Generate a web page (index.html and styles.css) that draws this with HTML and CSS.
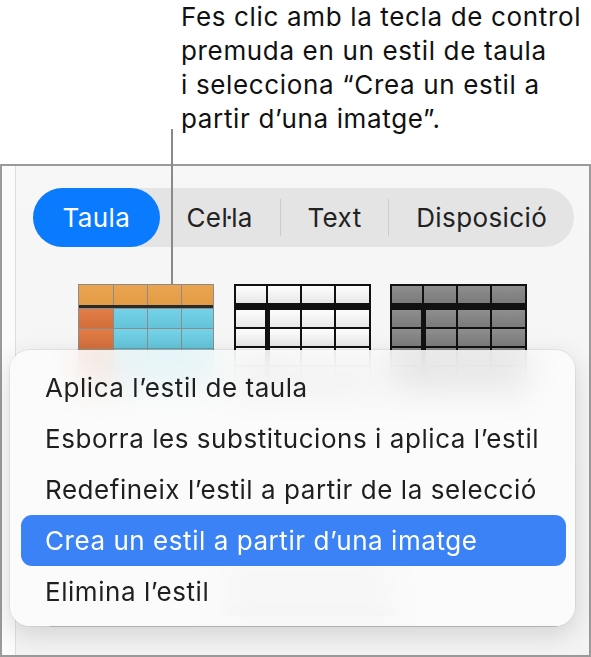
FILE: index.html
```html
<!DOCTYPE html>
<html lang="ca">
<head>
    <meta charset="UTF-8">
    <meta name="viewport" content="width=device-width, initial-scale=1.0">
    <title>Estils de taula</title>
    <link rel="stylesheet" href="styles.css">
</head>
<body>
    <p class="callout">Fes clic amb la tecla de control<br>premuda en un estil de taula<br>i selecciona “Crea un estil a<br>partir d’una imatge”.</p>
    <div class="leader"></div>

    <div class="panel">
        <div class="sidebar-edge"></div>
        <div class="inspector">
            <div class="tabs">
                <span class="tab active">Taula</span>
                <span class="tab">Cel·la</span>
                <span class="sep"></span>
                <span class="tab">Text</span>
                <span class="sep"></span>
                <span class="tab">Disposició</span>
            </div>

            <div class="styles">
                <div class="thumb thumb-color">
                    <div class="head"><i></i><i></i><i></i><i></i></div>
                    <div class="body">
                        <i class="first"></i><i></i><i></i><i></i>
                        <i class="first"></i><i></i><i></i><i></i>
                        <i class="first"></i><i></i><i></i><i></i>
                        <i class="first"></i><i></i><i></i><i></i>
                    </div>
                </div>
                <div class="thumb thumb-lined">
                    <div class="head"><i></i><i></i><i></i><i></i></div>
                    <div class="body">
                        <i></i><i></i><i></i><i></i>
                        <i></i><i></i><i></i><i></i>
                        <i></i><i></i><i></i><i></i>
                        <i></i><i></i><i></i><i></i>
                    </div>
                </div>
                <div class="thumb thumb-lined thumb-dark">
                    <div class="head"><i></i><i></i><i></i><i></i></div>
                    <div class="body">
                        <i></i><i></i><i></i><i></i>
                        <i></i><i></i><i></i><i></i>
                        <i></i><i></i><i></i><i></i>
                        <i></i><i></i><i></i><i></i>
                    </div>
                </div>
            </div>

            <div class="labels">
                <span class="label-bar"></span>
                <span class="label-bar short"></span>
            </div>

            <div class="rule"></div>
        </div>
    </div>

    <ul class="menu">
        <li class="item">Aplica l’estil de taula</li>
        <li class="item">Esborra les substitucions i aplica l’estil</li>
        <li class="item">Redefineix l’estil a partir de la selecció</li>
        <li class="item selected">Crea un estil a partir d’una imatge</li>
        <li class="item">Elimina l’estil</li>
    </ul>
</body>
</html>
```

FILE: styles.css
```css
body {
    margin: 0;
    width: 591px;
    height: 657px;
    overflow: hidden;
    background: #ffffff;
    font-family: "Inter", "Noto Sans", sans-serif;
    color: #1c1c1e;
}

.callout {
    margin: 0;
    box-sizing: border-box;
    height: 164px;
    padding: 0 0 0 181px;
    font-size: 26px;
    line-height: 34px;
    letter-spacing: 0.65px;
    color: #111111;
}

.leader {
    position: absolute;
    left: 171px;
    top: 129px;
    width: 2px;
    height: 155px;
    background: #8a8a8a;
    z-index: 2;
}

.panel {
    display: flex;
    box-sizing: border-box;
    height: 493px;
    border: 2px solid #9a9a9a;
    background: #f5f5f5;
}

.sidebar-edge {
    width: 13px;
    background: #fbfbfb;
    border-right: 1px solid #dedede;
}

.inspector {
    flex: 1;
    display: flex;
    flex-direction: column;
    background: linear-gradient(#f7f7f7, #f3f3f3);
}

/* segmented control */
.tabs {
    display: flex;
    align-items: center;
    height: 59px;
    margin: 22px 15px 0 17px;
    border-radius: 30px;
    background: #e4e4e4;
    font-size: 26px;
    letter-spacing: 0.4px;
}

.tab {
    flex: 1 1 auto;
    height: 59px;
    line-height: 59px;
    text-align: center;
    color: #222222;
}

.tab.active {
    flex-grow: 1.1;
    border-radius: 30px;
    background: #0a7bff;
    color: #ffffff;
}

.sep {
    width: 1px;
    height: 37px;
    background: #cccccc;
}

/* table style thumbnails */
.styles {
    display: flex;
    justify-content: center;
    gap: 19.5px;
    margin-top: 37px;
}

.thumb {
    display: flex;
    flex-direction: column;
    box-sizing: border-box;
}

.thumb i {
    display: block;
}

.thumb-color {
    width: 136px;
    padding: 1px;
    background: #8c8c8c;
}

.thumb-color .head {
    display: grid;
    grid-template-columns: 34px 33px 33px 31px;
    grid-auto-rows: 20px;
    gap: 1px;
    border-bottom: 3px solid #2a2a2a;
}

.thumb-color .head i {
    background: linear-gradient(#eaa44f, #e39b46);
}

.thumb-color .body {
    display: grid;
    grid-template-columns: 34px 33px 33px 31px;
    grid-auto-rows: 19px;
    gap: 1px;
    padding-top: 1px;
}

.thumb-color .body i {
    background: linear-gradient(#74d3e8, #64c3d9);
}

.thumb-color .body i.first {
    background: linear-gradient(#e27d46, #d26e3b);
}

.thumb-lined {
    width: 137px;
    padding: 2px;
    background: #111111;
}

.thumb-lined .head {
    display: grid;
    grid-template-columns: 30px 32px 32px 33px;
    grid-auto-rows: 17px;
    column-gap: 2px;
    margin-bottom: 7px;
}

.thumb-lined .body {
    display: grid;
    grid-template-columns: 32px 30px 32px 33px;
    grid-auto-rows: 17px;
    gap: 2px;
}

.thumb-lined .body i:nth-child(4n+1) {
    margin-right: 3px;
}

.thumb-lined i {
    background: linear-gradient(#fdfdfd, #e8e8e8);
}

.thumb-dark i {
    background: linear-gradient(#8e8e8e, #7b7b7b);
}

/* labels hidden behind the menu */
.labels {
    display: flex;
    flex-direction: column;
    gap: 17px;
    margin: 181px 0 0 210px;
}

.label-bar {
    width: 160px;
    height: 16px;
    border-radius: 4px;
    background: #b8b8b8;
}

.label-bar.short {
    width: 168px;
    height: 13px;
}

.rule {
    height: 2px;
    margin: 9px 32px 0 34px;
    background: #d3d3d3;
}

/* context menu */
.menu {
    position: absolute;
    left: 10px;
    top: 350px;
    width: 565px;
    height: 276px;
    box-sizing: border-box;
    margin: 0;
    padding: 12px 9px 9px 11px;
    list-style: none;
    border-radius: 20px;
    background: rgba(251, 251, 251, 0.86);
    backdrop-filter: blur(16px);
    -webkit-backdrop-filter: blur(16px);
    box-shadow: 0 0 0 1px rgba(0, 0, 0, 0.06), 0 8px 26px rgba(0, 0, 0, 0.14);
    z-index: 3;
    font-size: 26px;
    letter-spacing: 0.55px;
}

.item {
    height: 51px;
    line-height: 51px;
    padding-left: 24px;
    border-radius: 11px;
    color: #1f1f1f;
    white-space: nowrap;
}

.item.selected {
    background: #3b82f6;
    color: #ffffff;
}
```
